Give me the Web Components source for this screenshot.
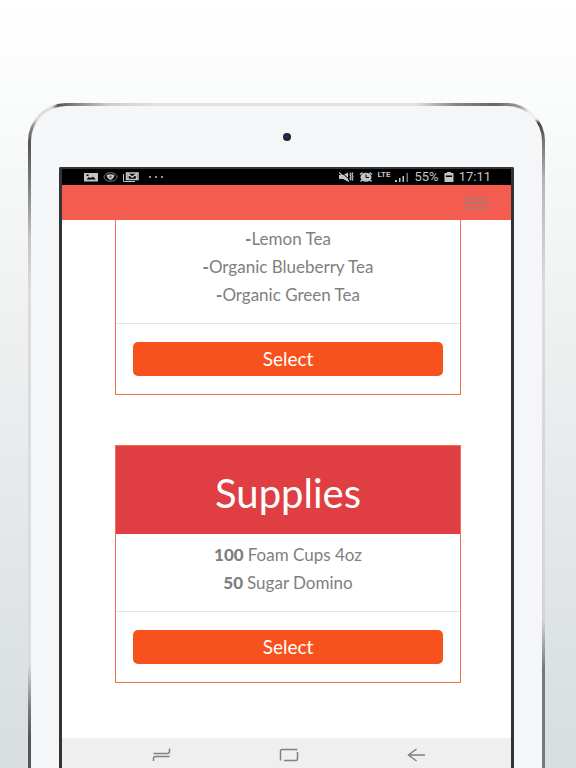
<!DOCTYPE html>
<html lang="en">
<head>
<meta charset="utf-8">
<title>Order supplies</title>
<style>
html,body{margin:0;height:100%}
body{font-family:Lato,"Liberation Sans",sans-serif;background:linear-gradient(#fff 0,#fafbfb 14%,#eff1f1 42%,#dde2e3 84%,#d8dee0 100%);overflow:hidden}
</style>
</head>
<body>
<promo-page>
  <span slot="headline">Click to edit this text</span>
  <tablet-frame>
    <status-bar></status-bar>
    <app-header></app-header>
    <scroll-area>
      <offer-card>
        <offer-item><b slot="qty">-</b>Lemon Tea</offer-item>
        <offer-item><b slot="qty">-</b>Organic Blueberry Tea</offer-item>
        <offer-item><b slot="qty">-</b>Organic Green Tea</offer-item>
      </offer-card>
      <offer-card heading="Supplies">
        <offer-item><b slot="qty">100 </b>Foam Cups 4oz</offer-item>
        <offer-item><b slot="qty">50 </b>Sugar Domino</offer-item>
      </offer-card>
    </scroll-area>
    <nav-bar></nav-bar>
  </tablet-frame>
</promo-page>
<script>
function define(name, html) {
  customElements.define(name, class extends HTMLElement {
    connectedCallback() {
      if (this.shadowRoot) return;
      const t = document.createElement('template');
      t.innerHTML = typeof html === 'function' ? html(this) : html;
      this.attachShadow({mode: 'open'}).append(t.content.cloneNode(true));
    }
  });
}

define('promo-page', `<style>
:host{display:flex;flex-direction:column;height:100vh;box-sizing:border-box;padding:0 31px 0 28px}
h1{margin:0;height:103px;box-sizing:border-box;padding-top:12px;text-align:center;font-weight:300;font-size:28px;line-height:34px;color:#fff}
</style><h1><slot name="headline"></slot></h1><slot></slot>`);

/* The rim is a 3px metallic band: one gradient for the top edge, one for each side. */
define('tablet-frame', `<style>
:host{display:flex;flex:1;min-height:0;box-sizing:border-box;padding:3px 3px 0;border-radius:38px 38px 0 0;
 background:
 linear-gradient(90deg,#ddd 0,#ddd 24px,#555 30px,#888 50px,#ccc 80px,#e2e2e2 130px,#e2e2e2 calc(100% - 130px),#888 calc(100% - 90px),#666 calc(100% - 50px),#999 calc(100% - 26px),#eee calc(100% - 16px)) top/100% 16px no-repeat,
 linear-gradient(#ddd 0,#888 8px,#555 24px,#77787a 60px,#c4c4c6 120px,#dcdcde 170px,#dcdcde 545px,#77787a 590px,#555 620px) left 16px/50% 100% no-repeat,
 linear-gradient(#eee 0,#444 4px,#777 24px,#b4b4b6 60px,#c4c4c6 100px,#dcdcde 170px,#d4d4d6 500px,#77787a 550px,#77787a 100%) right 16px/50% 100% no-repeat}
.face{flex:1;display:flex;flex-direction:column;min-width:0;background:#f4f6f8;border-radius:35px 35px 0 0;padding:0 28px}
.top{height:61px;display:flex;justify-content:center;align-items:center}
.cam{width:4px;height:4px;border:2px solid #20222c;border-radius:50%;background:#15306e}
.screen{flex:1;min-height:0;display:flex;flex-direction:column;background:#fff;border:solid #333436;border-width:2px 3px 0;border-radius:2px 2px 0 0;overflow:hidden}
</style><div class="face"><div class="top"><div class="cam"></div></div><div class="screen"><slot></slot></div></div>`);

define('status-bar', `<style>
:host{display:flex;flex:none;height:16px;background:#000;color:#c4c4c4;align-items:center;justify-content:space-between;padding:0 20px 0 22px;font:13px/16px Roboto,"Noto Sans",sans-serif}
div{display:flex;align-items:center;gap:5px}
svg{display:block;fill:#c4c4c4}
.lte{font-size:8px;line-height:8px;font-weight:700;padding-bottom:5px}
</style>
<div>
<svg width="14" height="10" viewBox="0 0 14 10"><path fill-rule="evenodd" d="M0 1h14v8.500H0zM2.500 7.500h9.500L9 4.800 7 6 4.500 5.200zM2.500 2.500h2V4h-2z"/></svg>
<svg width="15" height="10" viewBox="0 0 15 10"><ellipse cx="7.500" cy="5" rx="6.500" ry="4.300" fill="none" stroke="#777"/><path d="M3.500 3q4-1.500 8 0-.5 3.500-4 5Q4 6.500 3.500 3z"/><path d="M6.500 3.800h2v2h-2z" fill="#555"/></svg>
<svg width="16" height="10" viewBox="0 0 16 10"><path d="M.5 2v7.500H12" fill="none" stroke="#c4c4c4"/><path fill="none" stroke="#c4c4c4" stroke-width="1.500" d="M3.500 1h11.500v6.500H3.500z"/><path fill="none" stroke="#c4c4c4" stroke-width="1.500" d="M4 1l5.250 4L14.500 1M5 2v5M13.500 2v5"/></svg>
<svg width="24" height="10" viewBox="0 0 24 10"><circle cx="6" cy="5" r="1"/><circle cx="12" cy="5" r="1"/><circle cx="18" cy="5" r="1"/></svg>
</div>
<div>
<svg width="15" height="10" viewBox="0 0 15 10"><path d="M0 3h4L9 .5v9L4 7H0z"/><path d="M2 0l9 8" stroke="#000"/><path d="M0 .5l10 9M12 .5l-1 2 1 2-1 2 1 2M14 .5l-1 2 1 2-1 2 1 2" stroke="#c4c4c4" stroke-width="1.200" fill="none"/></svg>
<svg width="14" height="10" viewBox="0 0 14 10"><ellipse cx="7" cy="5.200" rx="5.500" ry="4.500"/><path d="M.8 2.500L3.500.7M13.200 2.500L10.500.7M3 8l-1.500 1.500M11 8l1.500 1.500" stroke="#c4c4c4" stroke-width="1.500"/><path d="M7 2.500v3h3" stroke="#000" fill="none"/></svg>
<span class="lte">LTE</span>
<svg width="14" height="10" viewBox="0 0 14 10"><path d="M0 8h2v2H0zM4 6h1.500v4H4zM7.500 4H9v6H7.500z"/><path d="M11.500 1H13v9h-1.500z" fill="#777"/></svg>
<span>55%</span>
<svg width="10" height="10" viewBox="0 0 10 10"><path fill-rule="evenodd" d="M3 0h4v1h2.500v9H.5V1H3zM2 3.500v1.500h6V3.500z"/></svg>
<span>17:11</span>
</div>`);

define('app-header', `<style>
:host{display:flex;flex:none;height:35px;background:#f55c50;justify-content:flex-end;align-items:center;padding-right:22px}
button{display:flex;flex-direction:column;gap:3px;width:25px;padding:0;border:0;background:none}
i{height:2px;width:100%;background:#b3766d}
</style><button aria-label="Menu"><i></i><i></i><i></i></button>`);

define('scroll-area', `<style>
:host{display:flex;flex:1;min-height:0;flex-direction:column;gap:50px;padding:0 50px 0 53px;overflow:hidden}
</style><slot></slot>`);

define('offer-card', el => `<style>
:host{display:block;flex:none;border:1px solid #f2704c;color:#808080}
:host(:not([heading])){border-top:0}
h2{margin:0;background:#df3f42;color:#fff;font-weight:400;font-size:40px;line-height:40px;padding:27px 0 21px;text-align:center}
ul{margin:0;padding:7px 0 14px;list-style:none;border-bottom:1px solid #e6e6e6}
:host(:not([heading])) ul{padding-top:5px}
.foot{padding:18px 17px}
button{display:block;width:100%;height:34px;border:0;border-radius:5px;background:#f7511d;color:#fff;font:19px/34px Lato,sans-serif;padding:0}
</style>${el.hasAttribute('heading') ? `<h2>${el.getAttribute('heading')}</h2>` : ''}
<ul role="list"><slot></slot></ul><div class="foot"><button>Select</button></div>`);

define('offer-item', `<style>
:host{display:block;text-align:center;font-size:17px;line-height:28px}
::slotted(b){font-weight:900;white-space:pre}
</style><div role="listitem"><slot name="qty"></slot><slot></slot></div>`);

define('nav-bar', `<style>
:host{display:flex;flex:none;height:30px;background:#efefef;align-items:center;justify-content:space-around;padding:4px 30px 0 36px;box-sizing:border-box}
button{border:0;padding:0;background:none}
svg{display:block;fill:none;stroke:#808080;stroke-width:1.500}
</style>
<button aria-label="Recent apps"><svg width="20" height="14" viewBox="0 0 20 14"><path d="M1.500 5.500h14q2 0 2-2V.5M1.500 13v-2.500q0-2 2-2h14"/></svg></button>
<button aria-label="Home"><svg width="20" height="14" viewBox="0 0 20 14"><path d="M1.500 12.500V3q0-1.500 1.500-1.500h14.500v1M18.500 4v7q0 1.500-1.500 1.500H5"/></svg></button>
<button aria-label="Back"><svg width="20" height="14" viewBox="0 0 20 14"><path d="M18 7H2M9.500 1L1.500 7l8 6"/></svg></button>`);
</script>
</body>
</html>
